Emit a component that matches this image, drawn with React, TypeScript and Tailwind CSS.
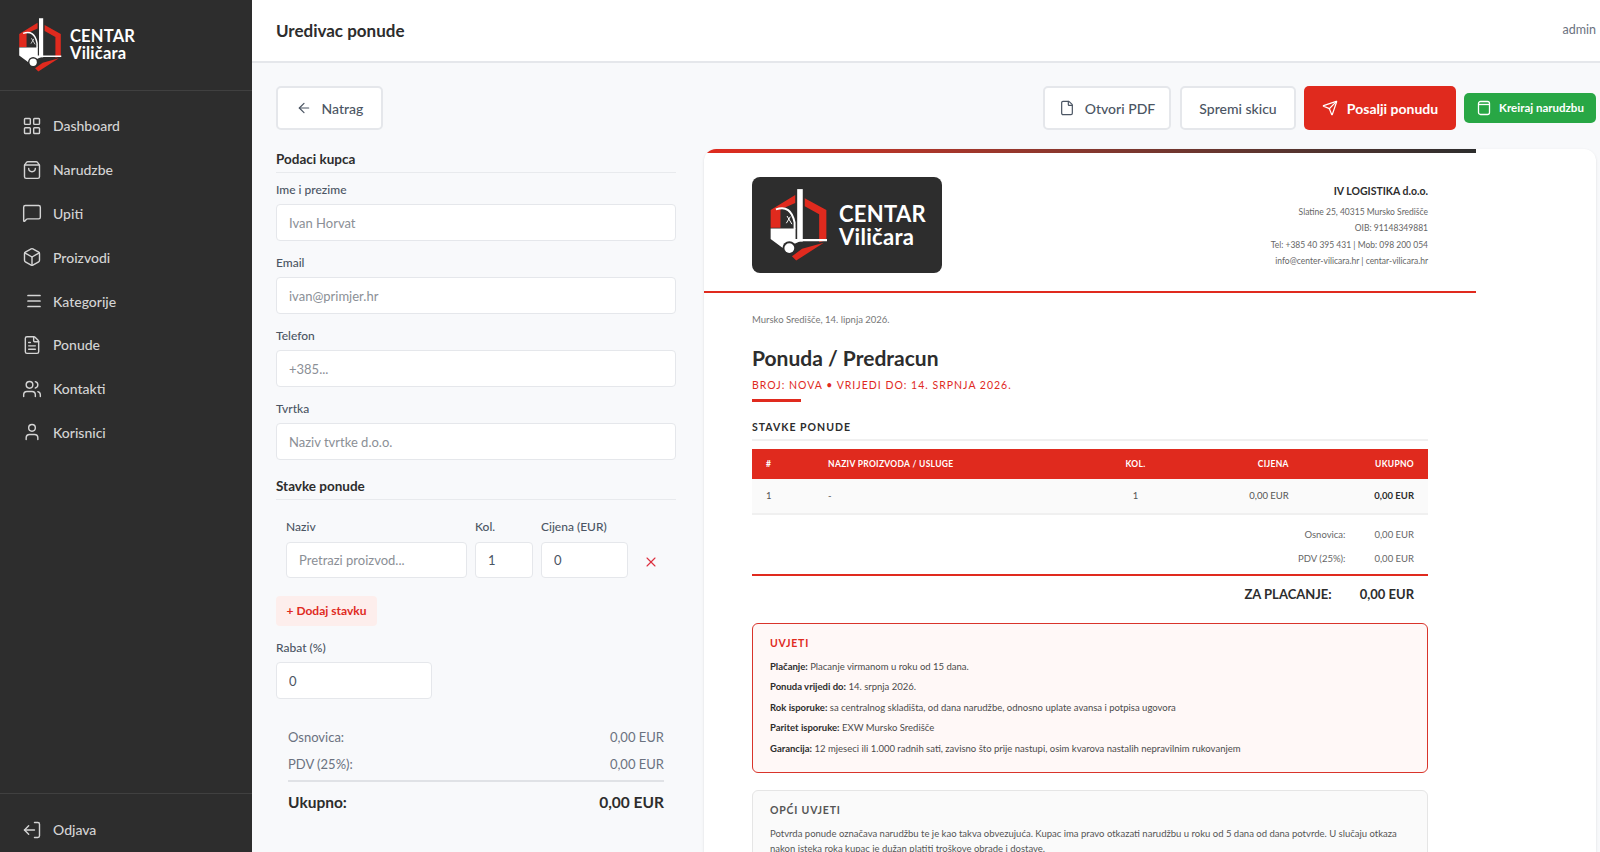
import { ArrowLeft, Box, File, FileText, LayoutGrid, LogOut, MessageSquare, Send, ShoppingBag, User, Users, X } from "lucide-react";
import type { ReactNode } from "react";

function Logo({ className }: { className: string }) {
  return (
    <svg viewBox="85 85 180 225" className={className}>
      <polygon points="194,116 260,152 260,244 238,250 238,165 194,140" fill="#e02a1e" />
      <polygon points="155,293 186,270 252,252 168,306" fill="#e02a1e" />
      <polygon points="90,152 165,106 165,130 120,150 120,206 90,206" fill="#e02a1e" />
      <rect x="171" y="88" width="17" height="160" fill="#fff" />
      <path d="M188 240H262V247H180L130 270 90 240V208H166V240Z" fill="#fff" />
      <path d="M106 150Q152 134 163 190V210" stroke="#fff" strokeWidth="6" fill="none" />
      <path d="M140 170L155 195M150 172L138 192" stroke="#fff" strokeWidth="3" fill="none" />
      <circle cx="147" cy="268" r="21" fill="#2d2d2d" />
      <circle cx="147" cy="268" r="15" fill="#fff" />
    </svg>
  );
}

function MenuLines() {
  return (
    <svg width="20" height="20" viewBox="0 0 20 20" fill="none" stroke="currentColor" strokeWidth="1.7" strokeLinecap="round">
      <path d="M6 4.5H18M6 10H18M6 15.5H18" />
    </svg>
  );
}

const nav: [string, ReactNode][] = [
  ["Dashboard", <LayoutGrid size={20} strokeWidth={1.7} />],
  ["Narudzbe", <ShoppingBag size={20} strokeWidth={1.7} />],
  ["Upiti", <MessageSquare size={20} strokeWidth={1.7} />],
  ["Proizvodi", <Box size={20} strokeWidth={1.7} />],
  ["Kategorije", <MenuLines />],
  ["Ponude", <FileText size={20} strokeWidth={1.7} />],
  ["Kontakti", <Users size={20} strokeWidth={1.7} />],
  ["Korisnici", <User size={20} strokeWidth={1.7} />],
];

function Sidebar() {
  return (
    <aside className="w-[252px] shrink-0 h-full bg-[#2d2d2d] flex flex-col text-[#d4d4d4]">
      <div className="h-[91px] shrink-0 border-b border-[#404040] flex items-center pl-[18px] gap-[8px]">
        <Logo className="w-[44px] h-[56px]" />
        <div className="text-white font-bold text-[16.5px] leading-[17px] tracking-[0.2px]">
          <div>CENTAR</div>
          <div>Viličara</div>
        </div>
      </div>
      <nav className="flex-1 pt-[13px]">
        {nav.map(([label, icon]) => (
          <div key={label} className="h-[43.8px] flex items-center pl-[22px] gap-[11px] text-[14px] font-medium">
            <span className="w-[20px] h-[20px] flex items-center justify-center">{icon}</span>
            {label}
          </div>
        ))}
      </nav>
      <div className="h-[59px] shrink-0 border-t border-[#404040] flex items-end pb-[12px] pl-[22px] gap-[11px] text-[14px] font-medium">
        <span className="w-[20px] h-[20px] flex items-center justify-center"><LogOut size={20} strokeWidth={1.7} className="-scale-x-100" /></span>
        Odjava
      </div>
    </aside>
  );
}

function Heading({ children }: { children: ReactNode }) {
  return <div className="h-[24px] border-b border-[#e8eaed] text-[13.5px] font-bold text-[#2d2d2d] leading-[20px]">{children}</div>;
}

function Field({ label, placeholder }: { label: string; placeholder: string }) {
  return (
    <div className="mb-[14px]">
      <div className="h-[16px] leading-[16px] text-[12px] font-medium text-[#4b5563] mb-[6px]">{label}</div>
      <input placeholder={placeholder} className="w-full h-[37px] bg-white border border-[#e5e7eb] rounded-[4px] px-[12px] text-[13px] text-[#4b5563] placeholder:text-[#8b8f96]" />
    </div>
  );
}

function Form() {
  return (
    <div className="w-[400px] shrink-0">
      <Heading>Podaci kupca</Heading>
      <div className="h-[9px]" />
      <Field label="Ime i prezime" placeholder="Ivan Horvat" />
      <Field label="Email" placeholder="ivan@primjer.hr" />
      <Field label="Telefon" placeholder="+385..." />
      <Field label="Tvrtka" placeholder="Naziv tvrtke d.o.o." />
      <div className="h-[2px]" />
      <Heading>Stavke ponude</Heading>
      <div className="pl-[10px] pt-[19px] flex gap-[8px] relative">
        <div className="w-[181px]">
          <div className="h-[16px] leading-[16px] text-[12px] font-medium text-[#4b5563] mb-[7px]">Naziv</div>
          <input placeholder="Pretrazi proizvod..." className="w-full h-[36px] bg-white border border-[#e5e7eb] rounded-[4px] px-[12px] text-[13px] placeholder:text-[#8b8f96]" />
        </div>
        <div className="w-[58px]">
          <div className="h-[16px] leading-[16px] text-[12px] font-medium text-[#4b5563] mb-[7px]">Kol.</div>
          <input defaultValue="1" className="w-full h-[36px] bg-white border border-[#e5e7eb] rounded-[4px] px-[12px] text-[13px] text-[#4b5563]" />
        </div>
        <div className="w-[87px]">
          <div className="h-[16px] leading-[16px] text-[12px] font-medium text-[#4b5563] mb-[7px] whitespace-nowrap">Cijena (EUR)</div>
          <input defaultValue="0" className="w-full h-[36px] bg-white border border-[#e5e7eb] rounded-[4px] px-[12px] text-[13px] text-[#4b5563]" />
        </div>
        <X size={16} strokeWidth={1.6} className="text-[#dc2e3e] mt-[35px] ml-[7px]" />
      </div>
      <button className="mt-[18px] w-[101px] h-[30px] bg-[#fdeeec] rounded-[4px] text-[12px] font-bold text-[#e02a1e] block">+ Dodaj stavku</button>
      <div className="mt-[14px] h-[16px] leading-[16px] text-[12px] font-medium text-[#4b5563] mb-[6px]">Rabat (%)</div>
      <input defaultValue="0" className="w-[156px] h-[37px] bg-white border border-[#e5e7eb] rounded-[4px] px-[12px] text-[13px] text-[#4b5563]" />
      <div className="mt-[27px] mx-[12px] text-[13px] text-[#6b7280]">
        <div className="flex justify-between h-[22px] leading-[22px]"><span>Osnovica:</span><span>0,00 EUR</span></div>
        <div className="flex justify-between h-[22px] leading-[22px] mt-[5px]"><span>PDV (25%):</span><span>0,00 EUR</span></div>
        <div className="h-[2px] bg-[#e0e2e6] mt-[5px]" />
        <div className="flex justify-between h-[24px] leading-[24px] mt-[8px] text-[15.5px] font-bold text-[#2d2d2d]"><span>Ukupno:</span><span>0,00 EUR</span></div>
      </div>
      <div className="mt-[33px] text-[12px] font-medium text-[#4b5563]">Napomena</div>
    </div>
  );
}

function Term({ b, t }: { b: string; t: string }) {
  return (
    <div className="h-[20.4px] leading-[20.4px] whitespace-nowrap text-[9.5px] text-[#4b4b4b]">
      <span className="font-bold text-[#2d2d2d]">{b}</span> {t}
    </div>
  );
}

function Doc() {
  return (
    <div className="flex-1 bg-white rounded-t-xl overflow-hidden shadow-sm">
      <div className="w-[772px]">
        <div className="h-[4px] bg-gradient-to-r from-[#e02a1e] to-[#2d2d2d]" />
        <div className="h-[140px] border-b-2 border-[#e02a1e] px-[48px] pt-[24px] flex justify-between items-start">
          <div className="w-[190px] h-[96px] rounded-[8px] bg-[#2d2d2d] flex items-center pl-[17px] gap-[11px]">
            <Logo className="w-[59px] h-[74px]" />
            <div className="text-white font-bold text-[22px] leading-[23px] tracking-[0.3px]">
              <div>CENTAR</div>
              <div>Viličara</div>
            </div>
          </div>
          <div className="text-right text-[8.5px] text-[#666] leading-[16.4px] pt-[6px]">
            <div className="text-[10.5px] font-bold text-[#2d2d2d] h-[21px]">IV LOGISTIKA d.o.o.</div>
            <div>Slatine 25, 40315 Mursko Središče</div>
            <div>OIB: 91148349881</div>
            <div>Tel: +385 40 395 431 | Mob: 098 200 054</div>
            <div>info@center-vilicara.hr | centar-vilicara.hr</div>
          </div>
        </div>
        <div className="px-[48px]">
          <div className="mt-[20px] h-[14px] leading-[14px] text-[9.5px] text-[#777]">Mursko Središče, 14. lipnja 2026.</div>
          <div className="mt-[16px] h-[30px] leading-[30px] text-[21px] font-bold text-[#2d2d2d]">Ponuda / Predracun</div>
          <div className="mt-[5px] h-[14px] leading-[14px] text-[10.5px] tracking-[1px] text-[#e02a1e]">BROJ: NOVA • VRIJEDI DO: 14. SRPNJA 2026.</div>
          <div className="mt-[7px] w-[49px] h-[3px] bg-[#e02a1e]" />
          <div className="mt-[18px] h-[14px] leading-[14px] text-[10.5px] font-bold tracking-[1px] text-[#2d2d2d]">STAVKE PONUDE</div>
          <div className="mt-[5px] h-[2px] bg-[#f0f0f0]" />
          <table className="mt-[8px] w-full table-fixed border-collapse">
            <thead>
              <tr className="h-[30px] bg-[#e02a1e] text-white text-[8.5px] font-bold tracking-[0.3px]">
                <th className="w-[76px] text-left pl-[14px]">#</th>
                <th className="w-[257px] text-left">NAZIV PROIZVODA / USLUGE</th>
                <th className="w-[100px] text-center">KOL.</th>
                <th className="w-[117px] text-right pr-[14px]">CIJENA</th>
                <th className="w-[125px] text-right pr-[14px]">UKUPNO</th>
              </tr>
            </thead>
            <tbody>
              <tr className="h-[35px] bg-[#fafafa] border-b-2 border-[#f0f0f0] text-[9.5px] text-[#555]">
                <td className="pl-[14px]">1</td>
                <td>-</td>
                <td className="text-center">1</td>
                <td className="text-right pr-[14px]">0,00 EUR</td>
                <td className="text-right pr-[14px] font-bold text-[#2d2d2d]">0,00 EUR</td>
              </tr>
            </tbody>
          </table>
          <div className="mt-[8px] text-[9.5px] text-[#666]">
            <div className="h-[24px] flex items-center justify-end pr-[14px]"><span className="mr-[29px]">Osnovica:</span><span>0,00 EUR</span></div>
            <div className="h-[24px] flex items-center justify-end pr-[14px]"><span className="mr-[29px]">PDV (25%):</span><span>0,00 EUR</span></div>
          </div>
          <div className="mt-[3px] h-[2px] bg-[#e02a1e]" />
          <div className="h-[37px] flex items-center justify-end pr-[14px] text-[13px] font-bold text-[#2d2d2d]"><span className="mr-[28px]">ZA PLACANJE:</span><span>0,00 EUR</span></div>
          <div className="mt-[10px] border-[1.5px] border-[#d9342b] rounded-[6px] bg-[#fff8f7] px-[17px] pt-[11px] h-[150px]">
            <div className="h-[16px] leading-[16px] text-[10.5px] font-bold tracking-[0.8px] text-[#e02a1e] mb-[6px]">UVJETI</div>
            <Term b="Plačanje:" t="Placanje virmanom u roku od 15 dana." />
            <Term b="Ponuda vrijedi do:" t="14. srpnja 2026." />
            <Term b="Rok isporuke:" t="sa centralnog skladišta, od dana narudžbe, odnosno uplate avansa i potpisa ugovora" />
            <Term b="Paritet isporuke:" t="EXW Mursko Središče" />
            <Term b="Garancija:" t="12 mjeseci ili 1.000 radnih sati, zavisno što prije nastupi, osim kvarova nastalih nepravilnim rukovanjem" />
          </div>
          <div className="mt-[17px] border-[1.5px] border-[#e5e5e5] rounded-[6px] bg-[#fafafa] px-[17px] pt-[11px] pb-[12px]">
            <div className="h-[16px] leading-[16px] text-[10.5px] font-bold tracking-[0.8px] text-[#555] mb-[8px]">OPĆI UVJETI</div>
            <div className="text-[9.5px] leading-[15px] text-[#555]">Potvrda ponude označava narudžbu te je kao takva obvezujuća. Kupac ima pravo otkazati narudžbu u roku od 5 dana od dana potvrde. U slučaju otkaza nakon isteka roka kupac je dužan platiti troškove obrade i dostave.</div>
          </div>
        </div>
      </div>
    </div>
  );
}

const outline = "h-[44px] bg-white border-2 border-[#e5e7eb] rounded-[5px] flex items-center justify-center gap-[10px] text-[14px] font-medium text-[#4b5563]";

export default function App() {
  return (
    <div className="h-screen w-full flex overflow-hidden bg-[#f8f9fb] font-[Lato,sans-serif]">
      <Sidebar />
      <div className="flex-1 min-w-0 flex flex-col">
        <header className="h-[63px] shrink-0 bg-white border-b-2 border-[#e5e7eb] flex items-center justify-between pl-[24px] pr-[4px]">
          <h1 className="text-[17px] font-bold text-[#2d2d2d]">Uredivac ponude</h1>
          <span className="text-[12.5px] text-[#6b7280]">admin</span>
        </header>
        <div className="flex-1 min-h-0 pl-[24px] pr-[4px] pt-[23px] flex flex-col overflow-hidden">
          <div className="flex justify-between items-center shrink-0 h-[44px]">
            <button className={`${outline} w-[107px]`}><ArrowLeft size={16} strokeWidth={1.8} />Natrag</button>
            <div className="flex items-center gap-[8px]">
              <button className={`${outline} w-[128px]`}><File size={16} strokeWidth={1.8} />Otvori PDF</button>
              <button className={`${outline} w-[116px] ml-[1px]`}>Spremi skicu</button>
              <button className="h-[44px] w-[152px] bg-[#e02a1e] rounded-[5px] flex items-center justify-center gap-[9px] text-[14px] font-bold text-white"><Send size={16} strokeWidth={1.8} />Posalji ponudu</button>
              <button className="h-[30px] w-[132px] bg-[#28a745] rounded-[5px] flex items-center justify-center gap-[7px] text-[11.5px] font-bold text-white">
                <svg width="16" height="16" viewBox="0 0 16 16" fill="none" stroke="currentColor" strokeWidth="1.3"><rect x="2.5" y="1.5" width="11" height="13" rx="2" /><path d="M2.5 4.5H13.5" /></svg>
                Kreiraj narudzbu
              </button>
            </div>
          </div>
          <div className="flex gap-[28px] mt-[19px] flex-1 min-h-0">
            <Form />
            <Doc />
          </div>
        </div>
      </div>
    </div>
  );
}
